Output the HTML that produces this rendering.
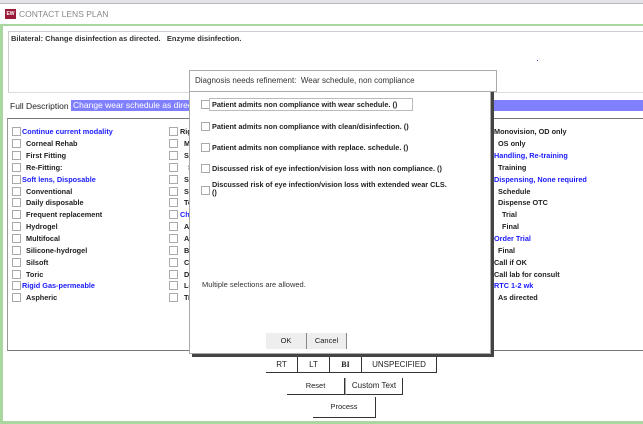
<!DOCTYPE html>
<html><head><style>
*{margin:0;padding:0;box-sizing:border-box}
body{width:643px;height:424px;overflow:hidden;background:#fff;font-family:"Liberation Sans",Tahoma,sans-serif;position:relative;font-size:8px;color:#222}
.a{position:absolute}
.b{font-weight:bold}
.blue{color:#1a1aff}
.cb{position:absolute;width:9px;height:9px;border:1px solid #aaa;background:#fff}
.row{position:absolute;white-space:nowrap;font-weight:bold;font-size:7.3px}
.btn{position:absolute;font-size:8px;text-align:center;background:#fff}
</style></head><body>
<div class="a" style="left:0;top:0;width:643px;height:4px;background:#e4e4e8;border-bottom:1px solid #bbb"></div>
<div class="a" style="left:0;top:24px;width:643px;height:2px;background:#a8d8a0"></div>
<div class="a" style="left:0;top:24px;width:3px;height:400px;background:#a8d8a0"></div>
<div class="a" style="left:0;top:421px;width:643px;height:3px;background:#a8d8a0"></div>
<div class="a" style="left:5px;top:9px;width:11px;height:10px;background:#9a1a3a;color:#fff;font-size:5px;font-weight:bold;line-height:10px;text-align:center">EW</div>
<div class="a" style="left:19px;top:9px;font-size:8.5px;color:#888">CONTACT LENS PLAN</div>
<div class="a" style="left:8px;top:31px;width:640px;height:62px;border-top:1px solid #ccc;border-left:1px solid #ccc;border-bottom:1px solid #ddd"></div>
<div class="a b" style="left:11px;top:34px;font-size:7.5px;color:#333">Bilateral: Change disinfection as directed.&nbsp;&nbsp;&nbsp;Enzyme disinfection.</div>
<div class="a" style="left:537px;top:60px;width:1px;height:1px;background:#44f"></div>
<div class="a" style="left:10px;top:101px;font-size:8.5px">Full Description</div>
<div class="a" style="left:71px;top:100px;width:572px;height:11px;background:#8080ff;color:#fff;font-size:8.5px;line-height:11px;padding-left:2px">Change wear schedule as directed</div>
<div class="a" style="left:7px;top:118px;width:640px;height:233px;border-top:1px solid #777;border-left:1px solid #999;border-bottom:1px solid #777"></div>

<div class="a" style="left:0;top:0">
<div class="cb" style="left:12px;top:127px"></div><div class="row blue" style="left:22px;top:127px">Continue current modality</div>
<div class="cb" style="left:12px;top:139px"></div><div class="row" style="left:26px;top:139px">Corneal Rehab</div>
<div class="cb" style="left:12px;top:151px"></div><div class="row" style="left:26px;top:151px">First Fitting</div>
<div class="cb" style="left:12px;top:163px"></div><div class="row" style="left:26px;top:163px">Re-Fitting:</div>
<div class="cb" style="left:12px;top:175px"></div><div class="row blue" style="left:22px;top:175px">Soft lens, Disposable</div>
<div class="cb" style="left:12px;top:187px"></div><div class="row" style="left:26px;top:187px">Conventional</div>
<div class="cb" style="left:12px;top:198px"></div><div class="row" style="left:26px;top:198px">Daily disposable</div>
<div class="cb" style="left:12px;top:210px"></div><div class="row" style="left:26px;top:210px">Frequent replacement</div>
<div class="cb" style="left:12px;top:222px"></div><div class="row" style="left:26px;top:222px">Hydrogel</div>
<div class="cb" style="left:12px;top:234px"></div><div class="row" style="left:26px;top:234px">Multifocal</div>
<div class="cb" style="left:12px;top:246px"></div><div class="row" style="left:26px;top:246px">Silicone-hydrogel</div>
<div class="cb" style="left:12px;top:258px"></div><div class="row" style="left:26px;top:258px">Silsoft</div>
<div class="cb" style="left:12px;top:270px"></div><div class="row" style="left:26px;top:270px">Toric</div>
<div class="cb" style="left:12px;top:281px"></div><div class="row blue" style="left:22px;top:281px">Rigid Gas-permeable</div>
<div class="cb" style="left:12px;top:293px"></div><div class="row" style="left:26px;top:293px">Aspheric</div>

<div class="cb" style="left:169px;top:127px"></div><div class="row" style="left:180px;top:127px">Rig</div>
<div class="cb" style="left:169px;top:139px"></div><div class="row" style="left:184px;top:139px">M</div>
<div class="cb" style="left:169px;top:151px"></div><div class="row" style="left:184px;top:151px">Se</div>
<div class="cb" style="left:169px;top:163px"></div><div class="row" style="left:188px;top:163px">S</div>
<div class="cb" style="left:169px;top:175px"></div><div class="row" style="left:184px;top:175px">Sp</div>
<div class="cb" style="left:169px;top:187px"></div><div class="row" style="left:184px;top:187px">Sy</div>
<div class="cb" style="left:169px;top:198px"></div><div class="row" style="left:184px;top:198px">Te</div>
<div class="cb" style="left:169px;top:210px"></div><div class="row blue" style="left:180px;top:210px">Cha</div>
<div class="cb" style="left:169px;top:222px"></div><div class="row" style="left:184px;top:222px">As</div>
<div class="cb" style="left:169px;top:234px"></div><div class="row" style="left:184px;top:234px">As</div>
<div class="cb" style="left:169px;top:246px"></div><div class="row" style="left:184px;top:246px">Bo</div>
<div class="cb" style="left:169px;top:258px"></div><div class="row" style="left:184px;top:258px">Cl</div>
<div class="cb" style="left:169px;top:270px"></div><div class="row" style="left:184px;top:270px">Di</div>
<div class="cb" style="left:169px;top:281px"></div><div class="row" style="left:184px;top:281px">Le</div>
<div class="cb" style="left:169px;top:293px"></div><div class="row" style="left:184px;top:293px">Tr</div>

<div class="row" style="left:494px;top:127px">Monovision, OD only</div>
<div class="row" style="left:498px;top:139px">OS only</div>
<div class="row blue" style="left:494px;top:151px">Handling, Re-training</div>
<div class="row" style="left:498px;top:163px">Training</div>
<div class="row blue" style="left:494px;top:175px">Dispensing, None required</div>
<div class="row" style="left:498px;top:187px">Schedule</div>
<div class="row" style="left:498px;top:198px">Dispense OTC</div>
<div class="row" style="left:502px;top:210px">Trial</div>
<div class="row" style="left:502px;top:222px">Final</div>
<div class="row blue" style="left:494px;top:234px">Order Trial</div>
<div class="row" style="left:498px;top:246px">Final</div>
<div class="row" style="left:494px;top:258px">Call if OK</div>
<div class="row" style="left:494px;top:270px">Call lab for consult</div>
<div class="row blue" style="left:494px;top:281px">RTC 1-2 wk</div>
<div class="row" style="left:498px;top:293px">As directed</div>
</div>

<!-- dialog -->
<div class="a" style="left:192px;top:72px;width:302px;height:285px;background:#444"></div>
<div class="a" style="left:189px;top:70px;width:302px;height:284px;background:#fff;border:1px solid #aaa"></div>
<div class="a" style="left:189px;top:70px;width:308px;height:22px;border:1px solid #aaa;background:#fff"></div>
<div class="a" style="left:195px;top:76px;font-size:8px;color:#333">Diagnosis needs refinement:&nbsp;&nbsp;Wear schedule, non compliance</div>
<div class="cb" style="left:201px;top:100px"></div><div class="a" style="left:209px;top:98px;width:204px;height:13px;border:1px solid #bbb"></div><div class="row" style="left:212px;top:100px">Patient admits non compliance with wear schedule. ()</div>
<div class="cb" style="left:201px;top:122px"></div><div class="row" style="left:212px;top:122px">Patient admits non compliance with clean/disinfection. ()</div>
<div class="cb" style="left:201px;top:143px"></div><div class="row" style="left:212px;top:143px">Patient admits non compliance with replace. schedule. ()</div>
<div class="cb" style="left:201px;top:164px"></div><div class="row" style="left:212px;top:164px">Discussed risk of eye infection/vision loss with non compliance. ()</div>
<div class="cb" style="left:201px;top:186px"></div><div class="row" style="left:212px;top:181px;line-height:8px">Discussed risk of eye infection/vision loss with extended wear CLS.<br>()</div>
<div class="a" style="left:202px;top:280px;font-size:7.5px;color:#333">Multiple selections are allowed.</div>
<div class="btn" style="left:266px;top:333px;width:41px;height:16px;background:#eee;border-right:1px solid #888;line-height:16px;font-size:7.5px">OK</div>
<div class="btn" style="left:307px;top:333px;width:40px;height:16px;background:#eee;border-right:1px solid #888;line-height:16px;font-size:7.5px">Cancel</div>

<div class="btn" style="left:266px;top:357px;width:32px;height:16px;border-right:1px solid #333;border-bottom:1px solid #333;line-height:15px">RT</div>
<div class="btn" style="left:298px;top:357px;width:32px;height:16px;border-right:1px solid #333;border-bottom:1px solid #333;line-height:15px">LT</div>
<div class="btn b" style="left:330px;top:357px;width:32px;height:16px;border-right:1px solid #333;border-bottom:1px solid #333;line-height:15px;font-family:'Liberation Serif',serif">BI</div>
<div class="btn" style="left:362px;top:357px;width:75px;height:16px;border-right:1px solid #333;border-bottom:1px solid #333;line-height:15px">UNSPECIFIED</div>
<div class="btn" style="left:287px;top:378px;width:58px;height:17px;border-right:1px solid #333;border-bottom:1px solid #333;line-height:16px;font-size:7.5px">Reset</div>
<div class="btn" style="left:345px;top:378px;width:58px;height:17px;border-right:1px solid #333;border-bottom:1px solid #333;line-height:16px;border-left:1px solid #aaa">Custom Text</div>
<div class="btn" style="left:313px;top:397px;width:63px;height:21px;border-right:1px solid #333;border-bottom:1px solid #333;line-height:20px;font-size:7.5px">Process</div>
</body></html>
